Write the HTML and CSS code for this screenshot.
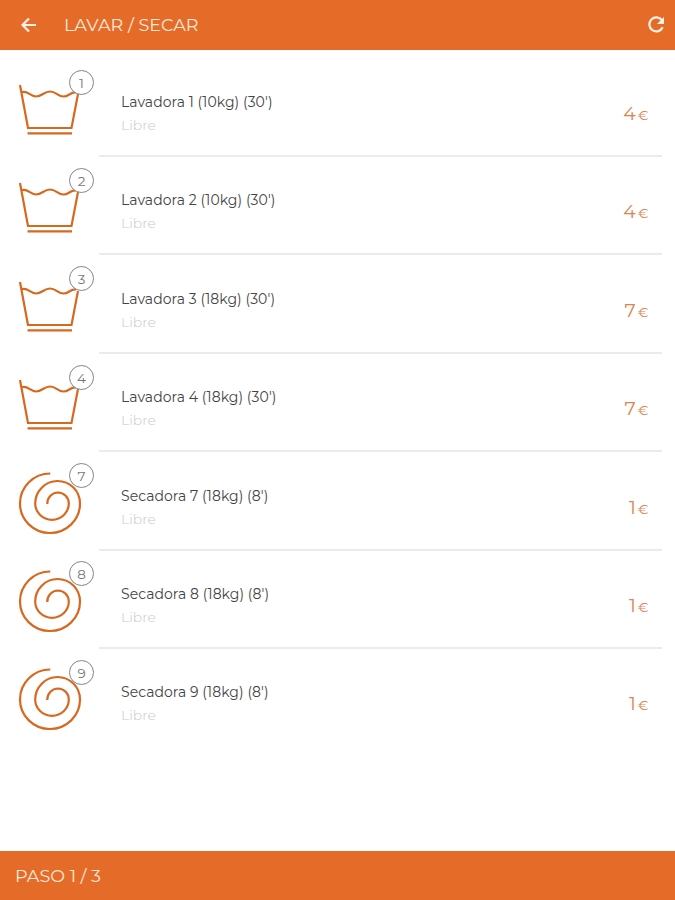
FILE: index.html
```html
<!DOCTYPE html>
<html lang="es">
<head>
  <meta charset="UTF-8">
  <meta name="viewport" content="width=device-width, initial-scale=1.0">
  <title>Lavar / Secar</title>
  <link rel="stylesheet" href="styles.css">
</head>
<body>
  <svg class="symbols" width="0" height="0">
    <symbol id="washer" viewBox="0 0 100 98">
      <path d="M20 27L28 70H71.5L78 36M21.500 34.500C27 31.500 30 38.500 36 38.500S44 33.500 50 33.500S58 38.500 63.500 38.500S70 34 76 34.500M27.500 75.300H72"/>
    </symbol>
    <symbol id="dryer" viewBox="0 0 100 98">
      <path d="M50.300 21.500A30.200 30 0 0 0 20 51.500A30 29.500 0 0 0 50 81A30 29.500 0 0 0 80 51.500A22.500 22.500 0 0 0 57.500 29A22.500 22.500 0 0 0 35.200 51.500A16.800 16.300 0 0 0 52 67.800A16.800 16.300 0 0 0 68.800 51.500A11 11 0 0 0 58 40.500A11 11 0 0 0 47.300 52"/>
    </symbol>
  </svg>

  <header class="header">
    <svg class="back" width="24" height="24" viewBox="0 0 24 24"><path d="M19 12H6M12 5.500L5.500 12L12 18.500"/></svg>
    <h1>LAVAR / SECAR</h1>
    <svg class="refresh" width="24" height="24" viewBox="0 0 24 24"><path d="M18 7.200A7 7 0 1 0 18.700 14.300"/><path class="tip" d="M20 4V11H13Z"/></svg>
  </header>

  <main class="list">
    <div class="item">
      <div class="icon"><svg><use href="#washer"/></svg><span class="badge">1</span></div>
      <div class="info"><div class="text"><p class="name">Lavadora 1 (10kg) (30')</p><p class="status">Libre</p></div><p class="price">4<small>€</small></p></div>
    </div>
    <div class="item">
      <div class="icon"><svg><use href="#washer"/></svg><span class="badge">2</span></div>
      <div class="info"><div class="text"><p class="name">Lavadora 2 (10kg) (30')</p><p class="status">Libre</p></div><p class="price">4<small>€</small></p></div>
    </div>
    <div class="item">
      <div class="icon"><svg><use href="#washer"/></svg><span class="badge">3</span></div>
      <div class="info"><div class="text"><p class="name">Lavadora 3 (18kg) (30')</p><p class="status">Libre</p></div><p class="price">7<small>€</small></p></div>
    </div>
    <div class="item">
      <div class="icon"><svg><use href="#washer"/></svg><span class="badge">4</span></div>
      <div class="info"><div class="text"><p class="name">Lavadora 4 (18kg) (30')</p><p class="status">Libre</p></div><p class="price">7<small>€</small></p></div>
    </div>
    <div class="item">
      <div class="icon"><svg><use href="#dryer"/></svg><span class="badge">7</span></div>
      <div class="info"><div class="text"><p class="name">Secadora 7 (18kg) (8')</p><p class="status">Libre</p></div><p class="price">1<small>€</small></p></div>
    </div>
    <div class="item">
      <div class="icon"><svg><use href="#dryer"/></svg><span class="badge">8</span></div>
      <div class="info"><div class="text"><p class="name">Secadora 8 (18kg) (8')</p><p class="status">Libre</p></div><p class="price">1<small>€</small></p></div>
    </div>
    <div class="item">
      <div class="icon"><svg><use href="#dryer"/></svg><span class="badge">9</span></div>
      <div class="info"><div class="text"><p class="name">Secadora 9 (18kg) (8')</p><p class="status">Libre</p></div><p class="price">1<small>€</small></p></div>
    </div>
  </main>

  <footer class="footer">PASO 1 / 3</footer>
</body>
</html>
```

FILE: styles.css
```css
* {
  box-sizing: border-box;
}

body {
  margin: 0;
  height: 100vh;
  display: flex;
  flex-direction: column;
  background: #fff;
  font-family: Montserrat, Inter, sans-serif;
}

h1, p {
  margin: 0;
  font-weight: 400;
}

svg {
  fill: none;
  stroke: #d9681f;
  stroke-width: 2.2;
}

.symbols {
  position: absolute;
}

.header {
  flex: none;
  display: flex;
  align-items: center;
  height: 50px;
  padding: 0 7px 0 17px;
  background: #e56b29;
  color: #fdeadb;
}

.header svg {
  stroke: #fff1e5;
  stroke-width: 2.2;
}

.header .tip {
  fill: #fff1e5;
  stroke: none;
}

.header h1 {
  flex: 1;
  margin-left: 23px;
  font-size: 17.6px;
  line-height: 24px;
}

.list {
  flex: 1;
  padding-top: 8px;
}

.item {
  display: flex;
  height: 98.4px;
  padding-right: 13px;
}

.icon {
  position: relative;
  width: 99px;
}

.icon svg {
  display: block;
  width: 100px;
  height: 98px;
}

.badge {
  position: absolute;
  left: 69px;
  top: 11.5px;
  width: 25px;
  height: 25px;
  border: 1px solid #858585;
  border-radius: 50%;
  background: #fff;
  color: #777;
  font-size: 13.5px;
  line-height: 24px;
  text-align: center;
}

.info {
  flex: 1;
  display: flex;
  justify-content: space-between;
  height: 99px;
  padding: 33px 13.5px 0 22px;
  border-bottom: 2px solid #ebebeb;
}

.item:last-child .info {
  border-bottom: none;
}

.name {
  color: #444;
  font-size: 14px;
  letter-spacing: 0.06px;
  line-height: 23px;
}

.status {
  color: #c8c8c8;
  font-size: 14px;
  font-weight: 300;
  line-height: 22px;
}

.price {
  padding-top: 10px;
  color: #dc8450;
  font-size: 19px;
  line-height: 26px;
}

.price small {
  margin-left: 2px;
  font-size: 13.5px;
}

.footer {
  flex: none;
  height: 49px;
  padding-left: 15px;
  background: #e56b29;
  color: #fdeadb;
  font-size: 17.6px;
  line-height: 49px;
}
```
